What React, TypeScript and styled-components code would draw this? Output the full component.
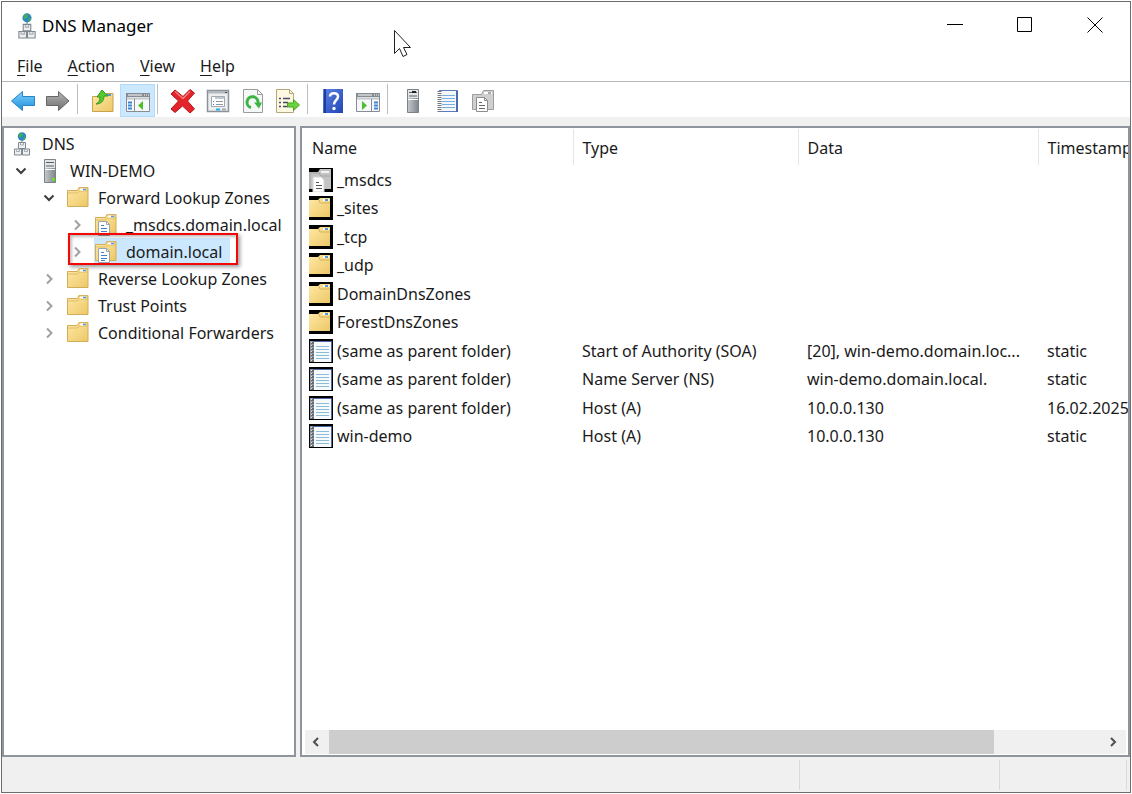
import React, { useState } from "react";
import styled, { createGlobalStyle, css } from "styled-components";

const GlobalStyle = createGlobalStyle`
  * { box-sizing: border-box; }
  body {
    margin: 0;
    background: #fff;
    color: #1a1a1a;
    font-family: "Noto Sans", "Open Sans", sans-serif;
    font-size: 16px;
    line-height: 24px;
  }
  button { font: inherit; color: inherit; border: 0; padding: 0; background: none; }
  svg { display: block; flex: none; }
`;

const Page = styled.div`
  min-height: 100vh;
  padding: 1px;
  display: flex;
`;

const Window = styled.main`
  flex: 1;
  min-width: 0;
  display: flex;
  flex-direction: column;
  border: 1px solid #6a6d70;
  background: #f0f0f0;
`;

const TitleBar = styled.header`
  display: flex;
  align-items: center;
  height: 48px;
  padding-left: 12px;
  background: #fff;
`;

const Title = styled.h1`
  flex: 1;
  margin: 0 0 0 2px;
  font-size: 17px;
  font-weight: 400;
  line-height: 24px;
  color: #000;
`;

const CaptionButton = styled.button`
  width: 70px;
  height: 44px;
  padding-bottom: 2px;
  display: flex;
  align-items: center;
  justify-content: center;
`;

const MenuBar = styled.nav`
  display: flex;
  height: 32px;
  padding: 0 2px;
  background: #fff;
  border-bottom: 1px solid #b4b7bb;
`;

const MenuItem = styled.button`
  padding: 0 12px 0 13px;
  line-height: 30px;
`;

const AccessKey = styled.span`
  text-decoration: underline;
  text-decoration-thickness: 1px;
  text-underline-offset: 3px;
`;

const Toolbar = styled.div`
  display: flex;
  height: 35px;
  padding: 2px 3px 0;
  background: #fff;
`;

const ToolButton = styled.button<{ $active?: boolean }>`
  width: 35px;
  height: 33px;
  display: flex;
  align-items: center;
  justify-content: center;
  ${(p) => p.$active && css`background: #cce8ff; border: 1px solid #b3dcfa;`}
`;

const ToolSeparator = styled.span`
  width: 10px;
  height: 30px;
  padding-left: 2px;
  &::before {
    content: "";
    display: block;
    width: 1px;
    height: 100%;
    background: #bcbec1;
  }
`;

const Panes = styled.div`
  flex: 1;
  display: flex;
  gap: 4px;
  padding-top: 9px;
`;

const paneFrame = css`
  background: #fff;
  border: 2px solid #8f949d;
`;

const TreePane = styled.aside`
  ${paneFrame}
  width: 294px;
  flex: none;
`;

const Tree = styled.ul`
  list-style: none;
  margin: 0;
  padding: 2px 0 0;
`;

const TreeRow = styled.li<{ $level: number }>`
  position: relative;
  display: flex;
  align-items: center;
  height: 27px;
  padding-left: ${(p) => (p.$level === 0 ? 6 : 7 + (p.$level - 1) * 28)}px;
  white-space: nowrap;
`;

const Expander = styled.button`
  width: 20px;
  height: 20px;
  margin-right: 7px;
  display: flex;
  align-items: center;
  justify-content: center;
`;

const TreeItem = styled.button<{ $selected?: boolean }>`
  display: flex;
  align-items: center;
  gap: 8px;
  height: 27px;
  padding-right: 8px;
  background: ${(p) => (p.$selected ? "#cce8ff" : "transparent")};
`;

const Callout = styled.span`
  position: absolute;
  left: 64px;
  top: -5px;
  width: 170px;
  height: 32px;
  border: 2px solid #f30707;
  box-shadow: 2px 2px 4px rgba(0, 0, 0, 0.4), inset 2px 2px 3px rgba(0, 0, 0, 0.25);
  pointer-events: none;
`;

const ListPane = styled.section`
  ${paneFrame}
  flex: 1;
  min-width: 0;
  display: flex;
  flex-direction: column;
  padding: 1px 0 1px 3px;
`;

const ListArea = styled.div`
  flex: 1;
  overflow: hidden;
`;

const Records = styled.table`
  width: 100%;
  table-layout: fixed;
  border-collapse: collapse;
`;

const HeadCell = styled.th<{ $width?: number }>`
  width: ${(p) => (p.$width ? `${p.$width}px` : "auto")};
  height: 36px;
  padding: 2px 0 0 9px;
  border-right: 1px solid #e5e5e5;
  text-align: left;
  font-weight: 400;
  white-space: nowrap;
  overflow: hidden;
  &:first-child { padding-left: 7px; }
  &:last-child { border-right: 0; }
`;

const RecordRow = styled.tr`
  height: 29px;
  &:nth-child(even) { height: 28px; }
`;

const Cell = styled.td`
  padding: 0 0 0 9px;
  white-space: nowrap;
  overflow: hidden;
  &:first-child { padding-left: 4px; }
`;

const NameContent = styled.span`
  display: flex;
  align-items: center;
  gap: 4px;
`;

const ScrollBar = styled.div`
  display: flex;
  height: 24px;
  margin-right: 2px;
  background: #f0f0f0;
`;

const ScrollArrow = styled.button`
  width: 24px;
  padding-right: 3px;
  display: flex;
  align-items: center;
  justify-content: center;
`;

const ScrollTrack = styled.div`
  flex: 1;
`;

const ScrollThumb = styled.div`
  width: 86%;
  height: 100%;
  background: #cdcdcd;
`;

const StatusBar = styled.footer`
  display: flex;
  height: 35px;
  padding: 3px 3px 2px 0;
`;

const StatusCell = styled.div<{ $width?: number }>`
  ${(p) => (p.$width ? `width: ${p.$width}px;` : "flex: 1;")}
  border-right: 1px solid #d9d9d9;
`;

const Pointer = styled.svg`
  position: absolute;
  left: 393px;
  top: 29px;
  pointer-events: none;
`;

const HiddenDefs = styled.svg`
  position: absolute;
`;

const Gradients = () => (
  <HiddenDefs width="0" height="0" aria-hidden="true">
    <defs>
      <linearGradient id="gold" x1="0" y1="0" x2="1" y2="1">
        <stop offset="0" stopColor="#ffe9a6" />
        <stop offset="1" stopColor="#ecc766" />
      </linearGradient>
      <linearGradient id="blue" x1="0" y1="0" x2="0" y2="1">
        <stop offset="0" stopColor="#7fd0fb" />
        <stop offset="1" stopColor="#1b8fdc" />
      </linearGradient>
      <linearGradient id="grey" x1="0" y1="0" x2="0" y2="1">
        <stop offset="0" stopColor="#b5b5b5" />
        <stop offset="1" stopColor="#6f6f6f" />
      </linearGradient>
      <linearGradient id="steel" x1="0" y1="0" x2="1" y2="0">
        <stop offset="0" stopColor="#c6cacd" />
        <stop offset="1" stopColor="#7d858c" />
      </linearGradient>
      <linearGradient id="help" x1="0" y1="0" x2="1" y2="1">
        <stop offset="0" stopColor="#5d83e6" />
        <stop offset="1" stopColor="#2145b4" />
      </linearGradient>
    </defs>
  </HiddenDefs>
);

const DnsIcon = ({ size = 24 }: { size?: number }) => (
  <svg width={size} height={size} viewBox="0 0 24 24">
    <path d="M12 7v6" stroke="#8a9299" />
    <circle cx="12" cy="4.5" r="4.2" fill="#2d86c6" />
    <path d="M9 2.2c2-1.6 4-1 4.3 .3-.6 1.6-1.8 1.2-2 3-1.7.5-3-1.2-2.3-3.3zM13.500 5l2.3-.7c.2 2-1 3.500-2.500 4z" fill="#3fae55" />
    <g fill="#eef0f2" stroke="#7f8890">
      <path d="M8.500 10.500h7v6h-7zM4.500 17h7v6h-7zM12.500 17h7v6h-7z" />
    </g>
    <path d="M10.500 11v2h3v-2M6.500 17.500v2h3v-2M14.500 17.500v2h3v-2" fill="none" stroke="#a4abb2" />
  </svg>
);

const ServerIcon = ({ light = true }: { light?: boolean }) => (
  <svg width="24" height="26" viewBox="0 0 24 26">
    <path d="M6.500 1.500h11v23h-11z" fill="url(#steel)" stroke="#7b8288" />
    <path d="M7 2h10v8H7z" fill="#e2e5e7" />
    <path d="M8 4.500h8M8 8h8" stroke="#596067" />
    {!light && <path d="M11 3h4v2h-4z" fill="#222" />}
    <path d="M7 11.500h10" stroke="#fff" />
    {light && <path d="M14 20h3v3h-3z" fill="#6be01f" />}
  </svg>
);

const FolderShape = () => (
  <>
    <path d="M1.500 4.500h10l1.500-3h9v19H1.500z" fill="url(#gold)" stroke="#d3ac57" />
    <path d="M12.500 2h9v3h-8l-2 2H2" fill="none" stroke="#dfbb69" />
    <path d="M14 3.500h6" stroke="#fff" strokeWidth="2" />
    <path d="M17 3.500h3" stroke="#4f9bd8" strokeWidth="1.500" />
  </>
);

const FolderIcon = () => (
  <svg width="24" height="24" viewBox="0 0 24 24"><FolderShape /></svg>
);

const ZoneIcon = () => (
  <svg width="24" height="24" viewBox="0 0 24 24">
    <FolderShape />
    <path d="M4.500 8.500h8l3 3v11h-11z" fill="#fff" stroke="#9aa5b1" />
    <path d="M12.500 8.500v3h3" fill="none" stroke="#9aa5b1" />
    <path d="M7 12.500h3M7 15.500h6M7 18.500h6M7 20.500h4" stroke="#3e82c4" />
  </svg>
);

const BackdropFolderIcon = () => (
  <svg width="24" height="24" viewBox="0 0 24 24">
    <path d="M0 0h24v24H0z" fill="#000" />
    <path d="M0 4h9l2-2h10v19H0z" fill="url(#gold)" />
    <path d="M10 4l1 3h10" fill="none" stroke="#d9b25c" />
    <path d="M14 4h6" stroke="#fff" strokeWidth="2" />
    <path d="M16 4h3" stroke="#4f9bd8" strokeWidth="2" />
  </svg>
);

const BackdropZoneIcon = () => (
  <svg width="24" height="24" viewBox="0 0 24 24">
    <path d="M0 0h24v24H0z" fill="#000" />
    <path d="M0 4h9l2-3h11v20H0z" fill="#c3c3c3" />
    <path d="M1 21V5h9l2 3h9" fill="none" stroke="#a3a3a3" />
    <path d="M12 4h8" stroke="#f2f2f2" strokeWidth="2" />
    <path d="M4 9h8l3 3v12H4z" fill="#fff" stroke="#d4d4d4" />
    <path d="M7 14.500h3M7 17.500h6M7 20.500h6" stroke="#555" />
  </svg>
);

const BackdropRecordIcon = () => (
  <svg width="24" height="24" viewBox="0 0 24 24">
    <path d="M0 0h24v24H0z" fill="#000" />
    <path d="M1 2h21v21H1z" fill="#8e9aae" />
    <path d="M5 3h17v20H5z" fill="#f6fafd" />
    <path d="M4 2.500h18.500V23" fill="none" stroke="#4d68a8" />
    <path d="M7 7.500h13M7 10.500h13M7 13.500h13M7 16.500h13M7 19.500h13" stroke="#8dbbdc" />
    <path d="M3.500 3v20" stroke="#6a6a6a" strokeWidth="3" strokeDasharray="2 1" />
    <path d="M2.500 3v20" stroke="#ddd" strokeDasharray="1 2" />
  </svg>
);

const NotebookIcon = () => (
  <svg width="24" height="24" viewBox="0 0 24 24">
    <path d="M3 2h19v21H3z" fill="#f4f8fc" />
    <path d="M3 1.500h18.500v21H3" fill="none" stroke="#5b7cb9" />
    <path d="M21 2v21" stroke="#496bb0" strokeWidth="2" />
    <path d="M6 6.500h13M6 9.500h13M6 12.500h13M6 15.500h13M6 18.500h13" stroke="#78aeda" />
    <path d="M3.500 2v21" stroke="#777" strokeWidth="4" strokeDasharray="1 1" />
  </svg>
);

const ArrowIcon = ({ forward = false }: { forward?: boolean }) => (
  <svg width="26" height="24" viewBox="0 0 26 24">
    {forward ? (
      <path d="M1.500 7.500h12v-5l10.500 9.500-10.500 9.500v-5h-12z" fill="url(#grey)" stroke="#666" />
    ) : (
      <path d="M24.500 7.500h-12v-5L1.500 12l11 9.500v-5h12z" fill="url(#blue)" stroke="#2685c6" />
    )}
  </svg>
);

const UpFolderIcon = () => (
  <svg width="24" height="24" viewBox="0 0 24 24">
    <path d="M1.500 7.500h9l2-3h9.500v18H1.500z" fill="url(#gold)" stroke="#cba24a" />
    <path d="M16 6h4" stroke="#4f9bd8" strokeWidth="2" />
    <path d="M5 15c3-1 4-4 4-7H6l5-7 6 6h-4c0 5-3 8-8 8z" fill="#54c930" stroke="#349a1b" />
  </svg>
);

const PaneIcon = ({ right = false }: { right?: boolean }) => (
  <svg width="26" height="24" viewBox="0 0 26 24">
    <path d="M1.500 4.500h23v18h-23z" fill="#f7f8f9" stroke="#858c93" />
    <path d="M1 4h24v4H1z" fill="#858c93" />
    <path d="M3 6h14M19 6h1M21 6h1M23 6h1" stroke="#fff" />
    <path d="M2 9.500h22" stroke="#c3c8cd" strokeWidth="2" />
    {right ? (
      <>
        <path d="M16.500 10v12" stroke="#858c93" />
        <path d="M19 13.500h4M19 16.500h4M19 19.500h4" stroke="#3c87d0" strokeWidth="2" />
        <path d="M7 12l5 4.500-5 4.500z" fill="#4dbf2c" />
      </>
    ) : (
      <>
        <path d="M9.500 10v12" stroke="#858c93" />
        <path d="M3 13.500h4M3 16.500h4M3 19.500h4" stroke="#3c87d0" strokeWidth="2" />
        <path d="M18 12l-5 4.500 5 4.500z" fill="#4dbf2c" />
      </>
    )}
  </svg>
);

const DeleteIcon = () => (
  <svg width="26" height="24" viewBox="0 0 26 24">
    <path d="M5 1l8 6.500L20 0.500l4.500 3.500-7 8 7 8-4.500 4-7.500-7L5 23.500 1 20l7.500-8L1 5z" fill="#e3242b" stroke="#b5161d" />
    <path d="M5 2.500l8 7 7-7" fill="none" stroke="#f47d80" strokeWidth="1.500" />
  </svg>
);

const PropertiesIcon = () => (
  <svg width="24" height="24" viewBox="0 0 24 24">
    <path d="M1.500 1.500h21v21h-21z" fill="#eceef0" stroke="#8b9299" strokeWidth="1.500" />
    <path d="M2 2h20v2.500H2z" fill="#b3b9bf" />
    <path d="M19 3.500h2" stroke="#444" />
    <path d="M5.500 7.500h13v10h-13z" fill="#fff" stroke="#a1a9b1" />
    <path d="M9 8h9v2H9z" fill="#c2c8ce" />
    <path d="M7 12.500h1M7 15.500h1" stroke="#3c87d0" />
    <path d="M10 12.500h7M10 15.500h7" stroke="#8f979f" />
    <path d="M10 20.500h4" stroke="#22b2ee" strokeWidth="2" />
    <path d="M16 20.500h4" stroke="#a4abb2" strokeWidth="2" />
  </svg>
);

const RefreshIcon = () => (
  <svg width="22" height="24" viewBox="0 0 22 24">
    <path d="M1.500 .5h14l5 5v18h-19z" fill="#f6f7f7" stroke="#9c9c9c" />
    <path d="M15.500 .5v5h5" fill="none" stroke="#9c9c9c" />
    <path d="M9 18.500a5.500 5.500 0 1 1 7-4.500" fill="none" stroke="#3db543" strokeWidth="3" />
    <path d="M12 13.500h8l-3 6z" fill="#3db543" />
  </svg>
);

const ExportIcon = () => (
  <svg width="26" height="24" viewBox="0 0 26 24">
    <path d="M1.500 .5h13l4 4v19h-17z" fill="#fdf8e2" stroke="#b5a77a" />
    <path d="M14.500 .5v4h4" fill="none" stroke="#b5a77a" />
    <path d="M4 9.500h2M4 13.500h2M4 17.500h2M8 9.500h7M8 13.500h5M8 17.500h5" stroke="#4a4a68" strokeWidth="1.500" />
    <path d="M12.500 14h6v-3.500l6 5.500-6 5.500V18h-6z" fill="#6dd33c" stroke="#45a722" />
  </svg>
);

const HelpIcon = () => (
  <svg width="22" height="24" viewBox="0 0 22 24">
    <path d="M1 0h20v24H1z" fill="url(#help)" />
    <path d="M3 0v24" stroke="#1d3c9c" strokeWidth="2" />
    <path d="M8 7.500C8 3 16 3 16 7.500c0 3.500-4 4-4 8" fill="none" stroke="#fff" strokeWidth="2.500" />
    <circle cx="12" cy="19.500" r="1.700" fill="#fff" />
  </svg>
);

const CopyZoneIcon = () => (
  <svg width="24" height="24" viewBox="0 0 24 24">
    <path d="M1.500 5.500h9l2-4h10v19h-21z" fill="#cfcfcf" stroke="#9c9c9c" />
    <path d="M13 4h8" stroke="#fff" strokeWidth="2" />
    <path d="M17 4h3" stroke="#555" />
    <path d="M5.500 8.500h8l3 3v11h-11z" fill="#fff" stroke="#8c8c8c" />
    <path d="M13.500 8.500v3h3" fill="none" stroke="#8c8c8c" />
    <path d="M8 13.500h3M8 16.500h6M8 19.500h6" stroke="#666" />
  </svg>
);

const ChevronIcon = ({ open }: { open: boolean }) => (
  <svg width="12" height="12" viewBox="0 0 12 12" fill="none">
    {open ? (
      <path d="M1.500 3.500L6 8l4.500-4.500" stroke="#3c3c3c" strokeWidth="2" />
    ) : (
      <path d="M4 1.500L8.500 6 4 10.500" stroke="#a0a0a0" strokeWidth="2" />
    )}
  </svg>
);

type TreeEntry = {
  label: string;
  level: number;
  icon: React.ReactNode;
  open?: boolean;
  outlined?: boolean;
};

const treeEntries: TreeEntry[] = [
  { label: "DNS", level: 0, icon: <DnsIcon /> },
  { label: "WIN-DEMO", level: 1, icon: <ServerIcon />, open: true },
  { label: "Forward Lookup Zones", level: 2, icon: <FolderIcon />, open: true },
  { label: "_msdcs.domain.local", level: 3, icon: <ZoneIcon /> },
  { label: "domain.local", level: 3, icon: <ZoneIcon />, outlined: true },
  { label: "Reverse Lookup Zones", level: 2, icon: <FolderIcon /> },
  { label: "Trust Points", level: 2, icon: <FolderIcon /> },
  { label: "Conditional Forwarders", level: 2, icon: <FolderIcon /> },
];

const records: { kind: "zone" | "folder" | "record"; cells: string[] }[] = [
  { kind: "zone", cells: ["_msdcs", "", "", ""] },
  { kind: "folder", cells: ["_sites", "", "", ""] },
  { kind: "folder", cells: ["_tcp", "", "", ""] },
  { kind: "folder", cells: ["_udp", "", "", ""] },
  { kind: "folder", cells: ["DomainDnsZones", "", "", ""] },
  { kind: "folder", cells: ["ForestDnsZones", "", "", ""] },
  { kind: "record", cells: ["(same as parent folder)", "Start of Authority (SOA)", "[20], win-demo.domain.loc...", "static"] },
  { kind: "record", cells: ["(same as parent folder)", "Name Server (NS)", "win-demo.domain.local.", "static"] },
  { kind: "record", cells: ["(same as parent folder)", "Host (A)", "10.0.0.130", "16.02.2025"] },
  { kind: "record", cells: ["win-demo", "Host (A)", "10.0.0.130", "static"] },
];

const recordIcons = {
  zone: <BackdropZoneIcon />,
  folder: <BackdropFolderIcon />,
  record: <BackdropRecordIcon />,
};

const toolGroups: { label: string; icon: React.ReactNode; active?: boolean }[][] = [
  [
    { label: "Back", icon: <ArrowIcon /> },
    { label: "Forward", icon: <ArrowIcon forward /> },
  ],
  [
    { label: "Up one level", icon: <UpFolderIcon /> },
    { label: "Show or hide console tree", icon: <PaneIcon />, active: true },
  ],
  [
    { label: "Delete", icon: <DeleteIcon /> },
    { label: "Properties", icon: <PropertiesIcon /> },
    { label: "Refresh", icon: <RefreshIcon /> },
    { label: "Export list", icon: <ExportIcon /> },
  ],
  [
    { label: "Help", icon: <HelpIcon /> },
    { label: "Show or hide action pane", icon: <PaneIcon right /> },
  ],
  [
    { label: "New server", icon: <ServerIcon light={false} /> },
    { label: "New record", icon: <NotebookIcon /> },
    { label: "New zone", icon: <CopyZoneIcon /> },
  ],
];

export default function App() {
  const [selected, setSelected] = useState("domain.local");
  return (
    <Page>
      <GlobalStyle />
      <Gradients />
      <Window>
        <TitleBar>
          <DnsIcon size={26} />
          <Title>DNS Manager</Title>
          <CaptionButton aria-label="Minimize">
            <svg width="16" height="16" viewBox="0 0 16 16"><path d="M0 7.500h16" stroke="#000" /></svg>
          </CaptionButton>
          <CaptionButton aria-label="Maximize">
            <svg width="16" height="16" viewBox="0 0 16 16"><path d="M.5 .5h14v14H.5z" fill="none" stroke="#000" /></svg>
          </CaptionButton>
          <CaptionButton aria-label="Close">
            <svg width="16" height="16" viewBox="0 0 16 16"><path d="M.5 .5l15 15M15.500 .5l-15 15" stroke="#000" /></svg>
          </CaptionButton>
        </TitleBar>
        <MenuBar>
          {["File", "Action", "View", "Help"].map((name) => (
            <MenuItem key={name}>
              <AccessKey>{name[0]}</AccessKey>{name.slice(1)}
            </MenuItem>
          ))}
        </MenuBar>
        <Toolbar>
          {toolGroups.map((group, i) => (
            <React.Fragment key={i}>
              {i > 0 && <ToolSeparator />}
              {group.map((tool) => (
                <ToolButton key={tool.label} aria-label={tool.label} $active={tool.active}>
                  {tool.icon}
                </ToolButton>
              ))}
            </React.Fragment>
          ))}
        </Toolbar>
        <Panes>
          <TreePane>
            <Tree>
              {treeEntries.map((entry) => (
                <TreeRow key={entry.label} $level={entry.level}>
                  {entry.level > 0 && (
                    <Expander aria-label={`Toggle ${entry.label}`}>
                      <ChevronIcon open={!!entry.open} />
                    </Expander>
                  )}
                  <TreeItem $selected={entry.label === selected} onClick={() => setSelected(entry.label)}>
                    {entry.icon}
                    {entry.label}
                  </TreeItem>
                  {entry.outlined && <Callout />}
                </TreeRow>
              ))}
            </Tree>
          </TreePane>
          <ListPane>
            <ListArea>
              <Records>
                <thead>
                  <tr>
                    <HeadCell $width={268}>Name</HeadCell>
                    <HeadCell $width={225}>Type</HeadCell>
                    <HeadCell $width={240}>Data</HeadCell>
                    <HeadCell>Timestamp</HeadCell>
                  </tr>
                </thead>
                <tbody>
                  {records.map((record, i) => (
                    <RecordRow key={i}>
                      <Cell>
                        <NameContent>{recordIcons[record.kind]}{record.cells[0]}</NameContent>
                      </Cell>
                      {record.cells.slice(1).map((text, j) => <Cell key={j}>{text}</Cell>)}
                    </RecordRow>
                  ))}
                </tbody>
              </Records>
            </ListArea>
            <ScrollBar>
              <ScrollArrow aria-label="Scroll left">
                <svg width="10" height="10" viewBox="0 0 10 10"><path d="M7 1L3 5l4 4" fill="none" stroke="#505050" strokeWidth="2" /></svg>
              </ScrollArrow>
              <ScrollTrack><ScrollThumb /></ScrollTrack>
              <ScrollArrow aria-label="Scroll right">
                <svg width="10" height="10" viewBox="0 0 10 10"><path d="M3 1l4 4-4 4" fill="none" stroke="#505050" strokeWidth="2" /></svg>
              </ScrollArrow>
            </ScrollBar>
          </ListPane>
        </Panes>
        <StatusBar>
          <StatusCell />
          <StatusCell $width={200} />
          <StatusCell $width={127} />
        </StatusBar>
      </Window>
      <Pointer width="20" height="30" viewBox="0 0 20 30">
        <path d="M1.500 1.500v23l5-5 3.500 8 4-2-3.500-7h7z" fill="#fff" stroke="#222" />
      </Pointer>
    </Page>
  );
}
